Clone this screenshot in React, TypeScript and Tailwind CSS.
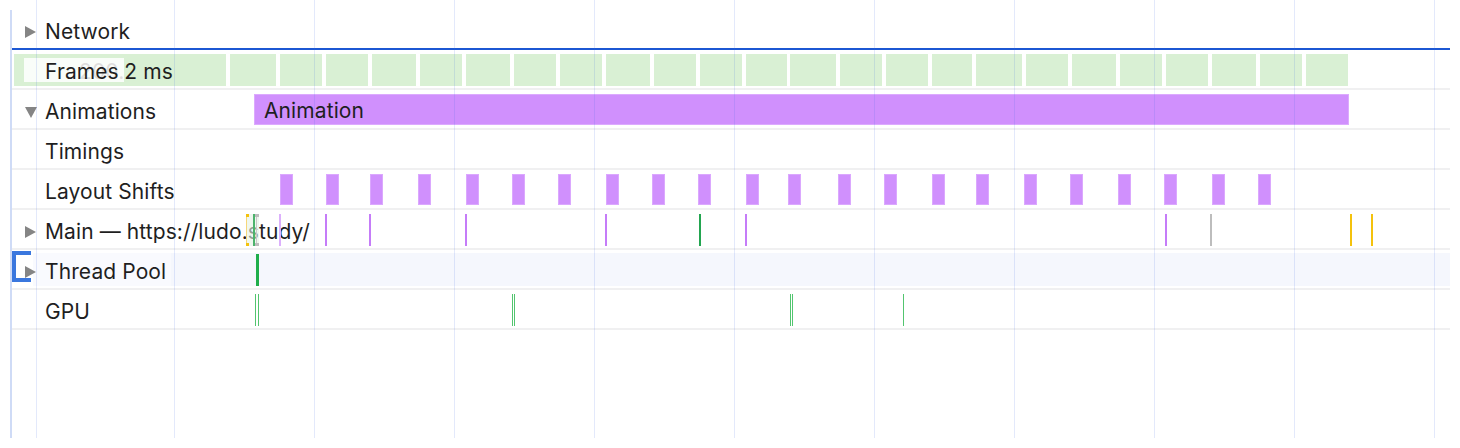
import type { ReactNode } from 'react'

// page x of every gridline (the first one sits at the left border)
const GRID = [36, 174, 314, 454, 594, 734, 874, 1014, 1154, 1294, 1434]

const FRAMES: [number, number][] = [
  [14, 226], [230, 276], [280, 322], [326, 368], [372, 416], [420, 462],
  [466, 510], [514, 556], [560, 602], [606, 650], [654, 696], [700, 742],
  [746, 787], [790, 836], [840, 882], [886, 928], [932, 972], [976, 1022],
  [1026, 1068], [1072, 1116], [1120, 1162], [1166, 1208], [1212, 1256],
  [1260, 1302], [1306, 1348],
]

const SHIFTS = [
  280, 326, 370, 418, 466, 512, 558, 606, 652, 698, 746, 788, 838, 884, 932,
  976, 1024, 1070, 1118, 1164, 1212, 1258,
]

const MAIN_TICKS: { x: number; color: string }[] = [
  { x: 279, color: '#dcb0fc' },
  { x: 325, color: '#c57cf8' },
  { x: 369, color: '#c57cf8' },
  { x: 465, color: '#c57cf8' },
  { x: 605, color: '#c57cf8' },
  { x: 699, color: '#23a550' },
  { x: 745, color: '#c57cf8' },
  { x: 1165, color: '#c57cf8' },
  { x: 1210, color: '#bdbdbd' },
  { x: 1350, color: '#f4c20d' },
  { x: 1371, color: '#f4c20d' },
]

const GPU_TICKS = [255, 258, 512, 514, 790, 792, 903]

// rows start at page x 12, so track events are shifted by that
const OX = 12

function Arrow({ open }: { open?: boolean }) {
  return (
    <span className="w-[20px] shrink-0 flex items-center">
      {open ? (
        <svg width="12" height="12" viewBox="0 0 12 12">
          <path d="M0 1h12L6 12z" fill="#858585" />
        </svg>
      ) : (
        <svg width="11" height="12" viewBox="0 0 11 12">
          <path d="M0 0l11 6L0 12z" fill="#858585" />
        </svg>
      )}
    </span>
  )
}

function Label({ arrow, open, children }: { arrow?: boolean; open?: boolean; children: ReactNode }) {
  return (
    <div className="relative h-full flex items-center pl-[13px] pt-[6px] text-[21px] text-[#1f1f1f] whitespace-nowrap">
      {arrow ? <Arrow open={open} /> : <span className="w-[20px] shrink-0" />}
      {children}
    </div>
  )
}

function Row({
  label,
  arrow,
  open,
  blue,
  children,
}: {
  label: ReactNode
  arrow?: boolean
  open?: boolean
  blue?: boolean
  children?: ReactNode
}) {
  return (
    <div
      className={`relative h-[40px] border-b-2 ${
        blue ? 'border-[#1c57d3]' : 'border-[#f0f0f1]'
      }`}
    >
      {children}
      <Label arrow={arrow} open={open}>
        {label}
      </Label>
    </div>
  )
}

export default function App() {
  return (
    <div className="relative w-[1460px] h-[448px] bg-white overflow-hidden font-[Inter,'Noto_Sans',sans-serif] tracking-[0.1px]">
      <div className="pt-[10px] pl-[12px] pr-[10px]">
        <Row label="Network" arrow blue />

        <div className="relative h-[40px] border-b-2 border-[#f0f0f1]">
          {FRAMES.map(([a, b], i) => (
            <div
              key={i}
              className="absolute top-[4px] h-[32px] bg-[#d9f0d4] flex items-center justify-center pt-[4px] pl-[12px] text-[21px] text-[#1f1f1f] whitespace-nowrap overflow-hidden"
              style={{ left: a - OX, width: b - a }}
            >
              {i === 0 ? '200.2 ms' : null}
            </div>
          ))}
          <div className="absolute left-[12px] top-[8px] h-[24px] w-[100px] bg-white/85" />
          <Label>Frames</Label>
        </div>

        <Row label="Animations" arrow open>
          <div
            className="absolute top-[4px] h-[31px] bg-[#d090fd] border border-[#dcaafe] flex items-center pl-[9px] pt-[3px] text-[21px] text-[#1f1f1f]"
            style={{ left: 254 - OX, width: 1349 - 254 }}
          >
            Animation
          </div>
        </Row>

        <Row label="Timings" />

        <Row label="Layout Shifts">
          {SHIFTS.map((x) => (
            <div
              key={x}
              className="absolute top-[4px] h-[31px] w-[13px] bg-[#d090fd] border border-[#dba8fe]"
              style={{ left: x - OX }}
            />
          ))}
        </Row>

        <div className="relative h-[40px] border-b-2 border-[#f0f0f1]">
          <Label arrow>Main — https://ludo.study/</Label>
          {/* small cluster of tasks right at the start */}
          <div
            className="absolute top-[4px] h-[32px] w-[13px] bg-[#e4f2e4]/60"
            style={{ left: 246 - OX }}
          >
            <div className="absolute left-0 top-0 h-full w-px bg-[#f6d779]" />
            <div className="absolute left-0 top-0 h-[3px] w-[3px] bg-[#f4c20d]" />
            <div className="absolute left-0 bottom-0 h-[3px] w-[3px] bg-[#f4c20d]" />
            <div className="absolute left-[7px] top-0 h-full w-[2px] bg-[#4cb36c]" />
            <div className="absolute left-[10px] top-0 h-full w-px bg-[#c9c9c9]" />
            <div className="absolute left-[9px] top-0 h-[3px] w-[4px] bg-[#bdbdbd]" />
            <div className="absolute left-[9px] bottom-0 h-[3px] w-[4px] bg-[#bdbdbd]" />
          </div>
          {MAIN_TICKS.map((t) => (
            <div
              key={t.x}
              className="absolute top-[4px] h-[32px] w-[2px]"
              style={{ left: t.x - OX, background: t.color }}
            />
          ))}
        </div>

        <div className="relative h-[40px] border-b-2 border-[#f0f0f1]">
          <div className="absolute left-[21px] right-0 top-[3px] h-[33px] bg-[#f5f7fd]" />
          <div className="absolute left-[21px] top-[3px] h-[33px] w-[138px] bg-white/40" />
          <div className="absolute left-0 top-[1px] w-[19px] h-[31px] border-l-4 border-t-4 border-b-4 border-[#3a77de]" />
          <div
            className="absolute top-[4px] h-[32px] w-[3px] bg-[#1fae4b]"
            style={{ left: 256 - OX }}
          />
          <Label arrow>Thread Pool</Label>
        </div>

        <Row label="GPU">
          {GPU_TICKS.map((x) => (
            <div
              key={x}
              className="absolute top-[4px] h-[32px] w-px bg-[#52c56f]"
              style={{ left: x - OX }}
            />
          ))}
        </Row>
      </div>

      {/* gridlines drawn over the tracks */}
      <div className="pointer-events-none absolute inset-0">
        <div className="absolute left-[10px] top-[10px] h-[428px] w-[2px] bg-[#cfdbf6]" />
        {GRID.map((x) => (
          <div
            key={x}
            className="absolute top-0 h-[438px] w-px bg-[rgba(66,110,230,0.15)]"
            style={{ left: x }}
          />
        ))}
      </div>
    </div>
  )
}
